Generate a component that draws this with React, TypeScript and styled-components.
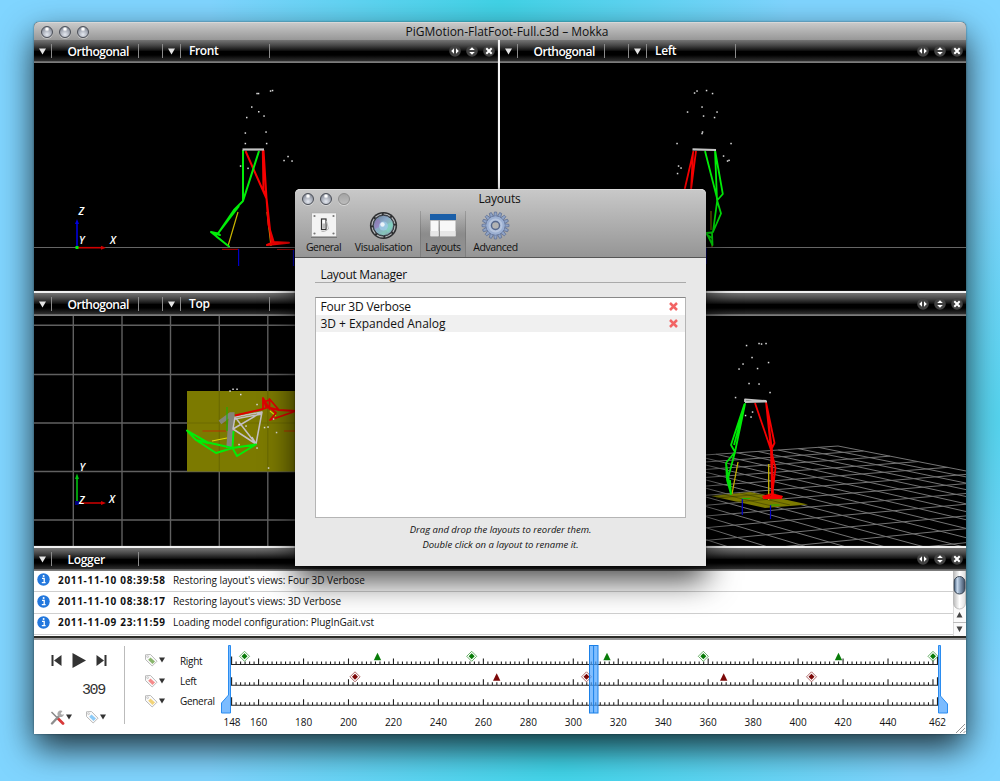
import React from "react";
import styled, { createGlobalStyle } from "styled-components";

const GlobalStyle = createGlobalStyle`
  * { box-sizing: border-box; }
  body {
    margin: 0;
    font-family: "Open Sans", "Noto Sans", sans-serif;
    color: #111;
    overflow: hidden;
  }
  svg { display: block; }
`;

const Desktop = styled.div`
  width: 1000px;
  height: 781px;
  padding: 22px 34px 47px;
  position: relative;
  background:
    radial-gradient(ellipse 290px 300px at 500px 0, #40d3e6 0%, rgba(67, 211, 232, 0) 100%),
    radial-gradient(ellipse 350px 200px at 560px 765px, #40d6ea 0%, rgba(72, 216, 238, 0) 100%),
    radial-gradient(ellipse 160px 260px at 1000px 420px, #55d4ee 0%, rgba(85, 212, 238, 0) 100%),
    #80d5ff;
`;

const AppWindow = styled.main`
  width: 932px;
  height: 712px;
  border-radius: 5px 5px 0 0;
  background: #000;
  display: flex;
  flex-direction: column;
  box-shadow: 0 14px 34px rgba(0, 0, 0, 0.78), 0 0 2px rgba(0, 0, 0, 0.5);
`;

const TitleBar = styled.header`
  height: 18px;
  flex: none;
  display: grid;
  grid-template-columns: 94px 1fr 80px;
  align-items: center;
  border-radius: 5px 5px 0 0;
  background: linear-gradient(#c9c9c9, #979797);
  border-top: 1px solid #d8d8d8;
`;

const Lights = styled.div<{ $gap: number; $left: number }>`
  display: flex;
  gap: ${(p) => p.$gap}px;
  padding-left: ${(p) => p.$left}px;
`;

const Light = styled.i<{ $off?: boolean }>`
  width: 12px;
  height: 12px;
  border-radius: 50%;
  border: 1px solid ${(p) => (p.$off ? "#8c8c8c" : "#4b4f58")};
  background: ${(p) =>
    p.$off
      ? "linear-gradient(#a4a4a4, #bcbcbc)"
      : "radial-gradient(circle at 50% 20%, #fff 0 10%, transparent 28%), radial-gradient(circle at 50% 75%, #e4e8f0 0%, #a9aeb9 50%, #666b77 100%)"};
  box-shadow: 0 1px 0 rgba(255, 255, 255, 0.4);
`;

const WindowTitle = styled.h1<{ $spacing?: number }>`
  margin: 0;
  text-align: center;
  font-size: 12px;
  line-height: 16px;
  font-weight: 400;
  letter-spacing: ${(p) => p.$spacing ?? 0}px;
  white-space: nowrap;
`;

const ViewRow = styled.div`
  display: grid;
  grid-template-columns: 464px 2px 466px;
  flex: none;
`;

const Gutter = styled.div`
  background: #f4f4f4;
  box-shadow: 0 0 1px #ddd;
`;

const Splitter = styled.div`
  height: 2px;
  flex: none;
  background: #f0f0f0;
  box-shadow: 0 0 1px #ccc;
`;

const Pane = styled.section`
  display: flex;
  flex-direction: column;
  overflow: hidden;
  svg { flex: none; }
`;

const PaneBar = styled.div`
  height: 23px;
  flex: none;
  display: flex;
  align-items: center;
  color: #fff;
  background: linear-gradient(#747474 0, #4a4a4a 22%, #161616 44%, #000 50%, #000 65%, #303030 92%, #7c7c7c 94%, #7c7c7c 100%);
`;

const BarCell = styled.div<{ $w: number; $pad?: number; $spacing?: number; $drop?: number }>`
  width: ${(p) => p.$w}px;
  height: 14px;
  padding-left: ${(p) => p.$pad ?? 0}px;
  padding-top: ${(p) => p.$drop ?? 0}px;
  border-right: 1px solid #8a8a8a;
  display: flex;
  align-items: center;
  font-size: 12px;
  font-weight: 600;
  line-height: 14px;
  letter-spacing: ${(p) => p.$spacing ?? 0}px;
  white-space: nowrap;
  margin-bottom: 1px;
`;

const BarTools = styled.div`
  margin-left: auto;
  padding-right: 3px;
  margin-bottom: 2px;
  display: flex;
  gap: 5px;
`;

const Canvas = styled.svg`
  background: #000;
`;

const AxisText = styled.text`
  fill: #fff;
  font: italic 600 10.5px "Open Sans", sans-serif;
`;

const LogList = styled.div`
  height: 65px;
  flex: none;
  display: grid;
  grid-template-columns: 1fr 13px;
  background: #fff;
`;

const LogRow = styled.div`
  height: 21.4px;
  display: flex;
  align-items: center;
  border-bottom: 1px solid #cfcfcf;
  font-size: 10px;
  line-height: 14px;
  letter-spacing: -0.05px;
  white-space: nowrap;
  padding: 0 0 3px 3px;
`;

const LogDate = styled.b`
  width: 123px;
  padding-left: 8px;
  letter-spacing: 0.68px;
  font-weight: 700;
`;

const Timeline = styled.div`
  flex: 1;
  display: flex;
  background: #fff;
  border-top: 2px solid #9a9a9a;
`;

const BlackEdge = styled.div`
  height: 2px;
  flex: none;
  background: #2c2c28;
`;

const Controls = styled.div`
  width: 91px;
  height: 78px;
  margin-top: 6px;
  border-right: 1px solid #bbb;
  display: flex;
  flex-direction: column;
`;

const ControlRow = styled.div<{ $h: number; $left: number; $gap: number }>`
  height: ${(p) => p.$h}px;
  flex: none;
  padding-left: ${(p) => p.$left}px;
  display: flex;
  align-items: center;
  gap: ${(p) => p.$gap}px;
`;

const FrameCounter = styled.output`
  font-family: "Liberation Mono", monospace;
  font-size: 15px;
  line-height: 16px;
  letter-spacing: -1.4px;
  margin-top: 4px;
  color: #333;
`;

const TrackHeads = styled.div`
  width: 92px;
  padding: 10px 0 0 19px;
`;

const TrackHead = styled.div`
  height: 20.4px;
  display: flex;
  align-items: center;
  font-size: 10px;
  letter-spacing: -0.3px;
  gap: 1px;
  span { margin: 1px 0 0 14px; line-height: 14px; white-space: nowrap; }
`;

const Dialog = styled.section`
  position: absolute;
  left: 295px;
  top: 189px;
  width: 411px;
  height: 377px;
  border-radius: 5px 5px 0 0;
  background: #e8e8e8;
  box-shadow: 0 14px 32px rgba(0, 0, 0, 0.75), 0 0 2px rgba(0, 0, 0, 0.6);
`;

const DialogHead = styled.div`
  height: 69px;
  border-radius: 5px 5px 0 0;
  background: linear-gradient(#c8c8c8, #959595);
  border-top: 1px solid #dadada;
  border-bottom: 1px solid #555;
`;

const DialogTitle = styled.div`
  height: 17px;
  display: grid;
  grid-template-columns: 80px 1fr 82px;
  align-items: center;
`;

const Tabs = styled.nav`
  display: flex;
  padding: 4px 0 0 5px;
`;

const Tab = styled.div<{ $w: number; $active?: boolean; $spacing?: number }>`
  width: ${(p) => p.$w}px;
  height: 46px;
  display: flex;
  flex-direction: column;
  align-items: center;
  font-size: 10.5px;
  line-height: 13px;
  letter-spacing: ${(p) => p.$spacing ?? 0}px;
  white-space: nowrap;
  ${(p) =>
    p.$active &&
    `background: linear-gradient(rgba(0,0,0,0), rgba(0,0,0,.16) 50%, rgba(0,0,0,.02));
     box-shadow: inset 1px 0 rgba(70,70,70,.25), inset -1px 0 rgba(70,70,70,.25);`}
  svg { flex: none; margin-bottom: 1px; }
`;

const DialogBody = styled.div`
  padding: 7px 20px 0 20px;
`;

const SectionTitle = styled.h2`
  margin: 0;
  padding: 0 0 0 5.5px;
  height: 18px;
  font-size: 12px;
  line-height: 20px;
  font-weight: 400;
  letter-spacing: -0.3px;
  border-bottom: 1px solid #aaa;
`;

const LayoutList = styled.div`
  height: 221px;
  margin-top: 14px;
  background: #fff;
  border: 1px solid #b5b5b5;
  border-top-color: #888;
`;

const LayoutItem = styled.div<{ $alt?: boolean; $spacing: number }>`
  height: 17px;
  padding: 0 7px 0 4.5px;
  display: flex;
  align-items: center;
  justify-content: space-between;
  font-size: 12px;
  line-height: 17px;
  letter-spacing: ${(p) => p.$spacing}px;
  background: ${(p) => (p.$alt ? "#f0f0f0" : "#fff")};
`;

const Hint = styled.p`
  margin: 0;
  padding-top: 4px;
  text-align: center;
  font-size: 9.5px;
  line-height: 15.4px;
  font-style: italic;
`;

const DownArrow = ({ c = "#e4e4e4", w = 7 }: { c?: string; w?: number }) => (
  <svg width={w} height={w} viewBox="0 0 7 7">
    <path d="M0 .5h7L3.5 6.5z" fill={c} />
  </svg>
);

const RoundTool = ({ kind }: { kind: "h" | "v" | "x" }) => (
  <svg width="12" height="12" viewBox="0 0 12 12">
    <circle cx="6" cy="6" r="5.8" fill="#424242" />
    {kind === "h" && <path d="M5 3.200V8.800L2.200 6zM7 3.200V8.800L9.800 6z" fill="#fff" />}
    {kind === "v" && <path d="M3.200 5H8.800L6 2.200zM3.200 7H8.800L6 9.800z" fill="#fff" />}
    {kind === "x" && <path d="M3.300 3.300l5.400 5.400M8.700 3.300l-5.400 5.400" stroke="#fff" strokeWidth="2" />}
  </svg>
);

const Tools = () => (
  <BarTools>
    <RoundTool kind="h" />
    <RoundTool kind="v" />
    <RoundTool kind="x" />
  </BarTools>
);

const ViewBar = ({ view }: { view: string }) => (
  <PaneBar>
    <BarCell $w={18} $pad={5}><DownArrow /></BarCell>
    <BarCell $w={87} $pad={15.5} $spacing={-0.5} $drop={2}>Orthogonal</BarCell>
    <BarCell $w={24} />
    <BarCell $w={18} $pad={5}><DownArrow /></BarCell>
    <BarCell $w={89} $pad={8} $spacing={-0.35}>{view}</BarCell>
    <Tools />
  </PaneBar>
);

const G = "#00ee08";
const R = "#f60000";
const Y = "#c8b400";

const Stick = ({ d, c, w = 1.6 }: { d: string; c: string; w?: number }) => (
  <path d={d} stroke={c} strokeWidth={w} fill="none" strokeLinejoin="round" />
);

const Dots = ({ pts }: { pts: number[][] }) => (
  <g fill="#ddd">
    {pts.map(([x, y], i) => (
      <rect key={i} x={x - 0.7} y={y - 0.7} width="1.5" height="1.5" />
    ))}
  </g>
);

const FrontView = () => (
  <Canvas width="464" height="228" viewBox="34 63 464 228">
    <Stick d="M34 247.5H498" c="#666" w={1} />
    <Dots pts={[[257, 93.5], [258.5, 93.5], [270.5, 91], [272.5, 90.5], [251.7, 107], [258.7, 111.7], [264, 116], [246.7, 117.5], [245.3, 133], [266, 132], [245.3, 143.5], [266.6, 143.5], [240.5, 166], [248, 168.3], [284, 160.5], [288, 156.5], [292, 161]]} />
    <Stick d="M222 249.3H239M277 249.5H294" c="#900000" w={1.2} />
    <Stick d="M238.6 249V266M293.5 250V266" c="#0000c8" w={1.2} />
    <Stick d="M238 212L228 246M267 212L271 246" c={Y} w={1.2} />
    <Stick d="M245.500 151L266.500 198.500M262.800 150L263.500 190L266.500 198.500L263.500 150M266.500 198L268.500 225L274 243M266.500 198L271.500 243L267 245L289 242.800L272 242" c={R} w={2} />
    <Stick d="M243 150V201L259 151M243 201L234 210L218 233.500L239 206M218 233.500L211 232L229 246.500L217 237L213 233L220 235Z" c={G} w={2} />
    <Stick d="M242.500 149.500H264" c="#c4c4c4" w={2.200} />
    <Stick d="M77 247V224" c="#0000dd" w={1.600} />
    <path d="M77 219l2 5h-4z" fill="#0000dd" />
    <Stick d="M77 247.700H102" c="#d00000" w={1.600} />
    <path d="M106 247.700l-5-2v4z" fill="#d00000" />
    <rect x="75.500" y="246" width="3" height="3" fill={G} />
    <AxisText x="78.500" y="214.500">Z</AxisText>
    <AxisText x="79" y="244">Y</AxisText>
    <AxisText x="110" y="244">X</AxisText>
  </Canvas>
);

const LeftView = () => (
  <Canvas width="466" height="228" viewBox="500 63 466 228">
    <Stick d="M500 247.5H966" c="#666" w={1} />
    <Dots pts={[[694.5, 93], [697, 91], [706.5, 90.5], [712.5, 93.5], [702, 107], [687.5, 112], [717, 112], [703.5, 116], [714.5, 117.5], [702.5, 132], [702, 133.5], [677, 143.5], [731, 143.5], [723.5, 156], [727.5, 161], [729, 160.3], [678.5, 166], [681, 168], [677.5, 173.5]]} />
    <Stick d="M711 211V230M712 244v3" c="#8a7a00" w={1.1} />
    <Stick d="M706.500 248v16" c="#000060" w={1} />
    <Stick d="M693.500 151L684.500 190M696 151L691 190M693 153L691 190" c={R} w={1.800} />
    <Stick d="M705 151L717.500 200L722.800 194L715 150L717 200L721 213.500L713 232L717.300 200M706.500 233L712.500 245L712 232.500ZM706 234L712 238" c={G} w={1.800} />
    <Stick d="M692.500 149.300L716 150" c="#c4c4c4" w={2.200} />
  </Canvas>
);

const TopView = () => (
  <Canvas width="464" height="230" viewBox="34 316 464 230">
    <Stick d="M73.300 316V546M122 316V546M170.500 316V546M219.300 316V546M267.800 316V546M34 325.300H498M34 374.500H498M34 423H498M34 471.500H498M34 520H498" c="#606060" w={1.400} />
    <rect x="187" y="391" width="120" height="80.500" fill="#7c7a00" />
    <Stick d="M219.300 391V471M267.800 391V471M187 423H295" c="#6c6a00" w={1.200} />
    <text transform="translate(213 448) skewX(-4)" fill="#84847a" fontSize="50" fontWeight="600" fontFamily="Open Sans">1</text>
    <Stick d="M202.500 431H226M284 431H298" c="#b83200" w={1.100} />
    <Stick d="M227 407V431" c="#20b000" w={1.200} />
    <Stick d="M212 441L227 438M270 411l6 5" c="#e0d800" w={1.100} />
    <Stick d="M235 417L262 412L256 444L233 429L235 417L256 444M233 429L262 412M235 419L262 414M256 444L252 437" c="#c4c0c4" w={1.500} />
    <Stick d="M235 415.500L263 409V398L269.500 409V399L279 410L296 411L270 420L276 413L269 407L263 409M263 398L266 407L279 410M264 402l5-2" c="#e00000" w={1.800} />
    <Stick d="M187 430.500L196 440L216 453L232.500 448L237 456L256 444.500L232.500 448L208 442.500L187 430.500L208 443L196 440M232.500 448L233.500 431" c={G} w={1.900} />
    <Dots pts={[[230, 391], [233, 389.200], [237, 389.200], [240.700, 394.500], [257, 404.500], [246, 426], [239, 444.500], [264.500, 427.500], [268, 427], [276.500, 432.500], [257, 448], [268.500, 468], [273.500, 419]]} />
    <Stick d="M77 502V479" c="#00c010" w={1.600} />
    <path d="M77 473.500l2 5.500h-4z" fill="#00c010" />
    <Stick d="M77 503H102" c="#d00000" w={1.500} />
    <path d="M106 503l-5-2v4z" fill="#d00000" />
    <rect x="75" y="501" width="4" height="4" fill="#000080" />
    <AxisText x="79.500" y="471">Y</AxisText>
    <AxisText x="79" y="504">Z</AxisText>
    <AxisText x="109" y="503">X</AxisText>
  </Canvas>
);

/* Floor grid seen in perspective: both line families converge on the horizon. */
const HORIZON = 240;
const CORNER = { x: 838, y: 446 };
const VANISH_LEFT = -218;
const VANISH_RIGHT = 3890;

function floorLines() {
  const depth = CORNER.y - HORIZON;
  const lines: string[] = [];
  for (let j = 0; j < 62; j++) {
    const k = 1 / (1 - j * 0.0064);
    const x = VANISH_RIGHT + (CORNER.x - VANISH_RIGHT) * k;
    const y = HORIZON + depth * k;
    lines.push(`M${x} ${y}L${VANISH_LEFT + (x - VANISH_LEFT) * 5} ${HORIZON + (y - HORIZON) * 5}`);
  }
  for (let i = 0; i < 26; i++) {
    const k = 1 / (1 - i * 0.0235);
    const x = VANISH_LEFT + (CORNER.x - VANISH_LEFT) * k;
    const y = HORIZON + depth * k;
    lines.push(`M${x} ${y}L${VANISH_RIGHT + (x - VANISH_RIGHT) * 1.6} ${HORIZON + (y - HORIZON) * 1.6}`);
  }
  return lines.join("");
}

const PerspectiveView = () => (
  <Canvas width="466" height="230" viewBox="500 316 466 230">
    <Stick d={floorLines()} c="#747474" w={1} />
    <path d="M711 496L750 492L808 504.500L765 508Z" fill="#7c7a00" />
    <Stick d="M716 498l60-5M735 502l50-4M722 494l50 12M740 493l50 12" c="#3d3c00" w={0.600} />
    <Dots pts={[[746.500, 345.500], [759, 343.500], [761.500, 344], [766, 343.500], [752, 357.500], [743, 364], [768.500, 362.500], [739, 369], [757.500, 368.500], [749, 383.500], [759, 384], [770, 392.500], [735.500, 397.500], [745.500, 415.500], [751, 417], [752.500, 412]]} />
    <Stick d="M738 462L732 494M768.700 464V500" c={Y} w={1.300} />
    <Stick d="M742.300 499V515M770.500 505V519" c="#0000c8" w={1.200} />
    <Stick d="M742 498.500h8M770.500 505h9" c="#20b000" w={1.200} />
    <Stick d="M755 403L771 450L774.500 443L766 402L771 450L775.500 468L772 496L771 450M766 402L772 450L773 496M763 496.500L782 496.500L772 494ZM763 498H782" c={R} w={1.800} />
    <Stick d="M744.500 404L731 445L735 452L745 404L734 445M735 452L726 463L727 480L731 494L728 478L735 452M726 463L731 494L730 480" c={G} w={1.800} />
    <Stick d="M745 402L745 399.500L766 401M745 402L767 401.500" c="#c4c4c4" w={1.800} />
  </Canvas>
);

const InfoIcon = () => (
  <svg width="13" height="13" viewBox="0 0 13 13">
    <circle cx="6.500" cy="6.500" r="6.200" fill="#2277dd" />
    <path d="M5 5.300h2.200v4.200M4.800 9.700h3.800" stroke="#fff" strokeWidth="1.300" fill="none" />
    <circle cx="6.600" cy="3" r="1" fill="#fff" />
  </svg>
);

const ScrollBar = () => (
  <svg width="13" height="65" viewBox="0 0 13 65">
    <defs>
      <linearGradient id="track"><stop offset="0" stopColor="#bbb" /><stop offset=".5" stopColor="#fff" /><stop offset="1" stopColor="#ddd" /></linearGradient>
      <linearGradient id="thumb"><stop offset="0" stopColor="#36506e" /><stop offset=".3" stopColor="#c6d8ec" /><stop offset=".6" stopColor="#8197b0" /><stop offset="1" stopColor="#39485c" /></linearGradient>
    </defs>
    <rect width="13" height="65" fill="#fafafa" />
    <rect x=".5" y="-6" width="12" height="44" rx="6" fill="url(#track)" stroke="#aaa" strokeWidth=".7" />
    <rect x="1" y="5.500" width="11" height="17.500" rx="5.500" fill="url(#thumb)" stroke="#3a4654" />
    <path d="M0 0V65M0 51.500H13" stroke="#bbb" />
    <path d="M3.500 46.500h6L6.500 41zM3.500 55.500h6L6.500 61z" fill="#444" />
  </svg>
);

const Tag = ({ c }: { c: string }) => (
  <svg width="14" height="14" viewBox="0 0 14 14">
    <path d="M1.500 1.800L6.500 1.500L13 8.200L8.200 13L1.500 6.500Z" fill="#fbfbfb" stroke="#b9b9b9" strokeWidth="1" strokeLinejoin="round" />
    <path d="M6.500 4.500L11 8.500L8.500 11L4.200 6.800Z" fill={c} />
    <circle cx="3.600" cy="3.700" r=".9" fill="#fff" stroke="#aaa" strokeWidth=".6" />
  </svg>
);

const ToolsIcon = () => (
  <svg width="15" height="15" viewBox="0 0 15 15">
    <path d="M1.500 2L8 8.500" stroke="#888" strokeWidth="1.500" />
    <path d="M8 8.500L13 13.500" stroke="#d83a3a" strokeWidth="2.800" strokeLinecap="round" />
    <path d="M2 13.500L10 5" stroke="#8d8d8d" strokeWidth="2.400" strokeLinecap="round" />
    <path d="M12.500 1A3.300 3.300 0 1 0 14 4.200L11.800 4.800L10.600 3.500Z" fill="#aaa" />
  </svg>
);

const SCALE = 2.248;
const frameX = (f: number) => 231.6 + (f - 148) * SCALE;
const FRAMES = Array.from({ length: 158 }, (_, i) => 148 + i * 2);
const MARKS = [160, 180, 200, 220, 240, 260, 280, 300, 320, 340, 360, 380, 400, 420, 440];

const Ruler = ({ y }: { y: number }) => (
  <path
    d={`M231 ${y}H938.5` + FRAMES.map((f) => `M${frameX(f)} ${y}v-${f === 148 || f === 462 ? 8 : f % 20 === 0 ? 6 : 3}`).join("")}
    stroke="#222"
    strokeWidth="1.1"
  />
);

const Diamond = ({ x, y, c }: { x: number; y: number; c: string }) => (
  <g transform={`translate(${x} ${y})`}>
    <path d="M0-5L5 0L0 5L-5 0Z" fill="#fff" stroke={c} strokeWidth=".8" opacity=".75" />
    <path d="M0-3L3 0L0 3L-3 0Z" fill={c} />
  </g>
);

const Triangle = ({ x, y, c }: { x: number; y: number; c: string }) => (
  <path d={`M${x} ${y - 4}l3.700 7.500h-7.400z`} fill={c} />
);

const Tick = styled.text`
  font-size: 10px;
  text-anchor: middle;
  fill: #111;
`;

const TimelineChart = () => (
  <svg width="749" height="94" viewBox="217 640 749 94">
    <Ruler y={664.500} />
    <Ruler y={685.300} />
    <Ruler y={705.300} />
    {[244.500, 471.700, 703.300, 933].map((x) => <Diamond key={x} x={x} y={656.300} c="#087c08" />)}
    {[377.500, 607, 838.500].map((x) => <Triangle key={x} x={x} y={656.800} c="#087c08" />)}
    {[355, 586.500, 811.500].map((x) => <Diamond key={x} x={x} y={676.800} c="#7c0808" />)}
    {[496.700, 723.700].map((x) => <Triangle key={x} x={x} y={677.300} c="#7c0808" />)}
    <path d="M228.500 645.500h2V713H221.500V703L228.500 695Z" fill="#7cbcff" stroke="#2a8cf0" />
    <path d="M938.500 645.500h2V696L947.500 704V713H938.500Z" fill="#7cbcff" stroke="#2a8cf0" />
    <rect x="589.500" y="645.500" width="8.500" height="67.500" fill="#4aa2ff" fillOpacity=".7" stroke="#1a80e8" />
    <path d="M593.600 646V713" stroke="#1a80e8" />
    <Tick x="232" y="725.500">148</Tick>
    {MARKS.map((f) => <Tick key={f} x={frameX(f)} y="725.500">{f}</Tick>)}
    <Tick x="937.500" y="725.500">462</Tick>
    <path d="M956 733l9-9M960 733l5-5M963.500 733l2-2" stroke="#888" strokeWidth=".9" />
  </svg>
);

const GeneralIcon = () => (
  <svg width="28" height="29" viewBox="0 0 28 29">
    <rect x="1" y="2.500" width="26" height="24.500" fill="#777" />
    <rect x="1.500" y="2" width="25" height="23.500" fill="#f3f3f3" stroke="#aaa" strokeWidth=".6" />
    <g fill="#777"><circle cx="4.500" cy="5" r="1.100" /><circle cx="23.500" cy="5" r="1.100" /><circle cx="4.500" cy="22.500" r="1.100" /><circle cx="23.500" cy="22.500" r="1.100" /></g>
    <rect x="11.500" y="8" width="4.500" height="10.500" fill="#fff" stroke="#333" strokeWidth="1.200" />
    <rect x="12.300" y="12.500" width="3" height="5" fill="#bbb" />
    <path d="M16.500 10l2 8-4 2.500h-3" fill="none" stroke="#bbb" strokeWidth="1" />
  </svg>
);

const LensIcon = () => (
  <svg width="29" height="29" viewBox="0 0 29 29">
    <defs>
      <linearGradient id="lens" x1="0" y1="0" x2="1" y2="1"><stop offset="0" stopColor="#64748c" /><stop offset=".4" stopColor="#8aa8c8" /><stop offset=".7" stopColor="#86c4b8" /><stop offset="1" stopColor="#8d7fb0" /></linearGradient>
    </defs>
    <circle cx="14.500" cy="14.500" r="13.600" fill="#2d2e30" />
    <circle cx="14.500" cy="14.500" r="11.500" fill="none" stroke="#b4b7ba" strokeWidth="1.200" strokeDasharray="7 2" />
    <circle cx="14.500" cy="14.500" r="10.200" fill="url(#lens)" stroke="#3a3f48" />
    <path d="M6 18A8.800 8.800 0 0 1 9 7.500L14 14Z" fill="#a06fc0" opacity=".5" />
    <path d="M14.500 14.500L23 11A9 9 0 0 1 19 22Z" fill="#7fe0c8" opacity=".45" />
    <circle cx="14.500" cy="15" r="4.500" fill="#9fc9e8" opacity=".8" />
    <circle cx="13.500" cy="13.500" r="2.200" fill="#fff" opacity=".8" />
  </svg>
);

const LayoutsIcon = () => (
  <svg width="28" height="29" viewBox="0 0 28 29">
    <rect x="1" y="3" width="26" height="6" fill="#1b5fa8" />
    <rect x="1.500" y="9.700" width="8" height="15.500" fill="#f8f8f8" />
    <rect x="11" y="9.700" width="15.500" height="15.500" fill="#f8f8f8" />
    <path d="M1.500 20h8v5.200h-8zM11 20h15.500v5.200H11z" fill="#e6e6e6" />
  </svg>
);

const GearIcon = () => (
  <svg width="29" height="29" viewBox="-14.500 -14.500 29 29">
    <g fill="#8fa3c6" stroke="#5a6c92" strokeWidth=".7">
      {Array.from({ length: 16 }, (_, i) => (
        <path key={i} d="M-1.700-9L-1.100-13.500H1.100L1.700-9Z" transform={`rotate(${i * 22.5})`} />
      ))}
      <circle r="9.500" />
    </g>
    <circle r="9.200" fill="#9cb0d2" />
    <circle r="6" fill="none" stroke="#b6c5df" strokeWidth="2" />
    <circle r="4" fill="#b3b3b3" stroke="#56678c" strokeWidth="1.400" />
  </svg>
);

const DeleteMark = () => (
  <svg width="9" height="9" viewBox="0 0 9 9">
    <path d="M1 1l7 7M8 1l-7 7" stroke="#f26464" strokeWidth="2.500" />
  </svg>
);

const logs = [
  ["2011-11-10 08:39:58", "Restoring layout's views: Four 3D Verbose"],
  ["2011-11-10 08:38:17", "Restoring layout's views: 3D Verbose"],
  ["2011-11-09 23:11:59", "Loading model configuration: PlugInGait.vst"],
];

export default function App() {
  return (
    <Desktop>
      <GlobalStyle />
      <AppWindow>
        <TitleBar>
          <Lights $gap={6} $left={7}><Light /><Light /><Light /></Lights>
          <WindowTitle $spacing={-0.03}>PiGMotion-FlatFoot-Full.c3d – Mokka</WindowTitle>
        </TitleBar>
        <ViewRow>
          <Pane><ViewBar view="Front" /><FrontView /></Pane>
          <Gutter />
          <Pane><ViewBar view="Left" /><LeftView /></Pane>
        </ViewRow>
        <Splitter />
        <ViewRow>
          <Pane><ViewBar view="Top" /><TopView /></Pane>
          <Gutter />
          <Pane><PaneBar><Tools /></PaneBar><PerspectiveView /></Pane>
        </ViewRow>
        <Splitter />
        <PaneBar>
          <BarCell $w={18} $pad={5}><DownArrow /></BarCell>
          <BarCell $w={87} $pad={15.5} $spacing={-0.3} $drop={2}>Logger</BarCell>
          <Tools />
        </PaneBar>
        <LogList>
          <div>
            {logs.map(([date, msg]) => (
              <LogRow key={date}><InfoIcon /><LogDate>{date}</LogDate>{msg}</LogRow>
            ))}
          </div>
          <ScrollBar />
        </LogList>
        <BlackEdge />
        <Timeline>
          <Controls>
            <ControlRow $h={28} $left={16.5} $gap={10}>
              <svg width="11" height="11" viewBox="0 0 11 11"><path d="M.500 0h2v11h-2zM10.500 0v11L3 5.500z" fill="#333" /></svg>
              <svg width="14" height="15" viewBox="0 0 14 15"><path d="M.500 0L14 7.500L.500 15z" fill="#333" /></svg>
              <svg width="11" height="11" viewBox="0 0 11 11"><path d="M8.500 0h2v11h-2zM.500 0v11L8 5.500z" fill="#333" /></svg>
            </ControlRow>
            <ControlRow $h={30} $left={48} $gap={0}><FrameCounter>309</FrameCounter></ControlRow>
            <ControlRow $h={26} $left={16} $gap={1}>
              <ToolsIcon /><DownArrow c="#333" w={6} />
              <ControlRow $h={20} $left={12} $gap={1}><Tag c="#8ccbf8" /><DownArrow c="#333" w={6} /></ControlRow>
            </ControlRow>
          </Controls>
          <TrackHeads>
            <TrackHead><Tag c="#88b56c" /><DownArrow c="#333" w={6} /><span>Right</span></TrackHead>
            <TrackHead><Tag c="#f58a8a" /><DownArrow c="#333" w={6} /><span>Left</span></TrackHead>
            <TrackHead><Tag c="#f2d377" /><DownArrow c="#333" w={6} /><span>General</span></TrackHead>
          </TrackHeads>
          <TimelineChart />
        </Timeline>
      </AppWindow>

      <Dialog>
        <DialogHead>
          <DialogTitle>
            <Lights $gap={6} $left={7}><Light /><Light /><Light $off /></Lights>
            <WindowTitle $spacing={-0.2}>Layouts</WindowTitle>
          </DialogTitle>
          <Tabs>
            <Tab $w={47} $spacing={-0.5}><GeneralIcon />General</Tab>
            <Tab $w={73} $spacing={-0.3}><LensIcon />Visualisation</Tab>
            <Tab $w={46} $active $spacing={-0.4}><LayoutsIcon />Layouts</Tab>
            <Tab $w={59} $spacing={-0.45}><GearIcon />Advanced</Tab>
          </Tabs>
        </DialogHead>
        <DialogBody>
          <SectionTitle>Layout Manager</SectionTitle>
          <LayoutList>
            <LayoutItem $spacing={-0.2}>Four 3D Verbose<DeleteMark /></LayoutItem>
            <LayoutItem $alt $spacing={-0.05}>3D + Expanded Analog<DeleteMark /></LayoutItem>
          </LayoutList>
          <Hint>Drag and drop the layouts to reorder them.<br />Double click on a layout to rename it.</Hint>
        </DialogBody>
      </Dialog>
    </Desktop>
  );
}
